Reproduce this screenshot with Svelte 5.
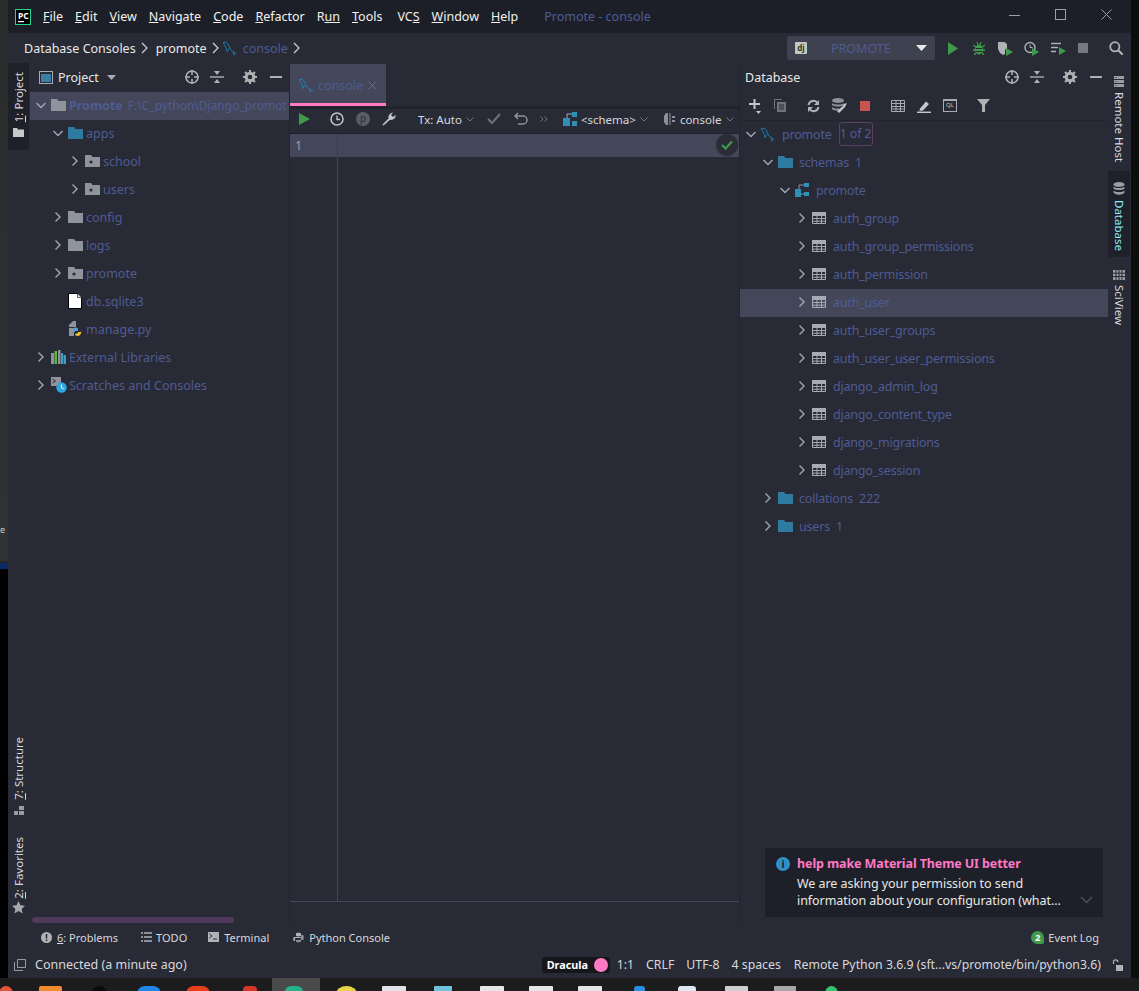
<script>
  const menus = [
    ["F", "ile"], ["E", "dit"], ["V", "iew"], ["N", "avigate"], ["C", "ode"],
    ["R", "efactor"], ["R", "un", true], ["T", "ools"], ["VC", "S", true],
    ["W", "indow"], ["H", "elp"],
  ];

  const projectTree = [
    { depth: 0, open: true, icon: "folder", label: "Promote", bold: true, path: "F:\\C_python\\Django_promot", selected: true },
    { depth: 1, open: true, icon: "folderBlue", label: "apps" },
    { depth: 2, open: false, icon: "pkg", label: "school" },
    { depth: 2, open: false, icon: "pkg", label: "users" },
    { depth: 1, open: false, icon: "folder", label: "config" },
    { depth: 1, open: false, icon: "folder", label: "logs" },
    { depth: 1, open: false, icon: "pkg", label: "promote" },
    { depth: 1, leaf: true, icon: "file", label: "db.sqlite3" },
    { depth: 1, leaf: true, icon: "python", label: "manage.py" },
    { depth: 0, open: false, icon: "libs", label: "External Libraries" },
    { depth: 0, open: false, icon: "scratch", label: "Scratches and Consoles" },
  ];

  const tables = [
    "auth_group", "auth_group_permissions", "auth_permission", "auth_user",
    "auth_user_groups", "auth_user_user_permissions", "django_admin_log",
    "django_content_type", "django_migrations", "django_session",
  ];

  const dbTree = [
    { depth: 0, open: true, icon: "mysql", label: "promote", badge: "1 of 2" },
    { depth: 1, open: true, icon: "folderBlue", label: "schemas", count: "1" },
    { depth: 2, open: true, icon: "schema", label: "promote" },
    ...tables.map((t) => ({ depth: 3, open: false, icon: "table", label: t, selected: t === "auth_user" })),
    { depth: 1, open: false, icon: "folderBlue", label: "collations", count: "222" },
    { depth: 1, open: false, icon: "folderBlue", label: "users", count: "1" },
  ];

  // x is the left edge of each taskbar icon
  const taskIcons = [
    { x: -1, w: 14, c: "#e5533d", r: "50%" },
    { x: 39, w: 23, c: "#f28a2e", r: "2px" },
    { x: 92, w: 15, c: "#0a0a0a", r: "50%" },
    { x: 137, w: 24, c: "#1f86e8", r: "8px" },
    { x: 186, w: 24, c: "#e8401c", r: "8px" },
    { x: 243, w: 14, c: "#d8352a", r: "4px" },
    { x: 285, w: 18, c: "#25b38a", r: "6px", current: true },
    { x: 336, w: 21, c: "#e9d24a", r: "50%" },
    { x: 382, w: 24, c: "#dfe3e8", r: "1px" },
    { x: 434, w: 18, c: "#6fc3df", r: "1px" },
    { x: 480, w: 24, c: "#e6e6e6", r: "1px" },
    { x: 529, w: 24, c: "#e6e6e6", r: "1px" },
    { x: 578, w: 24, c: "#e6e6e6", r: "1px" },
    { x: 634, w: 11, c: "#2a8fe0", r: "3px" },
    { x: 678, w: 18, c: "#dfe7ef", r: "3px" },
    { x: 725, w: 23, c: "#cfcfcf", r: "1px" },
    { x: 774, w: 22, c: "#a8a8a8", r: "1px" },
    { x: 825, w: 13, c: "#35c46b", r: "50%" },
  ];

  function taskMargin(i) {
    if (i === 0) return taskIcons[0].x;
    return taskIcons[i].x - taskIcons[i - 1].x - taskIcons[i - 1].w;
  }
</script>

{#snippet chevron(open)}
  <svg class="chev" width="12" height="12" viewBox="0 0 12 12">
    {#if open}
      <path d="M1.500 4l4.500 4.500L10.500 4" fill="none" stroke="#a3a7b2" stroke-width="1.400" />
    {:else}
      <path d="M3.500 1.500L8 6l-4.500 4.500" fill="none" stroke="#a3a7b2" stroke-width="1.400" />
    {/if}
  </svg>
{/snippet}

{#snippet mysql()}
  <svg width="15" height="15" viewBox="0 0 15 15">
    <path d="M.5 1.500c2.500-1 4 .5 5 2.500s1.500 4 3 5.500 3.500 2 5 3.500M.5 1.500C1 4 2.500 5.500 3.500 7.500l.5 3M4 10.500c1-1.500 1.500-2 2-3M10.500 11.500l.5 3" fill="none" stroke="#1d86b8" stroke-width="1" />
  </svg>
{/snippet}

{#snippet nodeIcon(name)}
  {#if name === "folder" || name === "folderBlue"}
    <svg width="15" height="12" viewBox="0 0 15 12">
      <path d="M0 0h6l1.500 2H15v10H0z" fill={name === "folder" ? "#8f939e" : "#2f7a9f"} />
    </svg>
  {:else if name === "pkg"}
    <svg width="15" height="12" viewBox="0 0 15 12">
      <path d="M0 0h6l1.500 2H15v10H0z" fill="#8f939e" />
      <circle cx="6" cy="7" r="1.600" fill="#282a36" />
    </svg>
  {:else if name === "file"}
    <svg width="14" height="16" viewBox="0 0 14 16">
      <path d="M.5.500h9l4 4v11H.5z" fill="#fff" stroke="#000" />
      <path d="M9.500.500v4h4" fill="#ddd" stroke="#000" stroke-width=".6" />
    </svg>
  {:else if name === "python"}
    <svg width="14" height="16" viewBox="0 0 14 16">
      <path d="M1 4l4-4h3v6H1z" fill="#8f939e" />
      <path d="M1 7h5v8H1z" fill="#8f939e" />
      <path d="M5 8c0-2 5-2 5 0v2H7v1H5z" fill="#4f9fd0" />
      <path d="M13 9c1 3-1 6-3 6s-3-1-3-2l3-1v-1h3z" fill="#f0c030" />
    </svg>
  {:else if name === "libs"}
    <svg width="15" height="14" viewBox="0 0 15 14">
      <rect x="0" y="3" width="3" height="11" fill="#8f939e" />
      <rect x="3.500" y="1" width="2.500" height="13" fill="#62b543" />
      <rect x="7" y="0" width="2.500" height="14" fill="#8f939e" />
      <rect x="10" y="3" width="2" height="11" fill="#3d9fc9" />
      <rect x="12.500" y="5" width="2.500" height="9" fill="#3d9fc9" />
    </svg>
  {:else if name === "scratch"}
    <svg width="16" height="16" viewBox="0 0 16 16">
      <rect x="0" y="0" width="10" height="9" fill="#8f939e" />
      <path d="M1.500 2l3 2-3 2" fill="none" stroke="#282a36" />
      <circle cx="10.500" cy="10.500" r="5.200" fill="#2fa8e0" />
      <path d="M10.500 7.500v3.300l2.200 1" fill="none" stroke="#fff" />
    </svg>
  {:else if name === "mysql"}
    {@render mysql()}
  {:else if name === "schema"}
    <svg width="15" height="14" viewBox="0 0 15 14">
      <rect x="9" y="0" width="5" height="4" fill="#2f8fb5" />
      <rect x="0" y="6" width="6" height="8" fill="#2f8fb5" />
      <rect x="9" y="9" width="5" height="4" fill="#2f8fb5" />
      <path d="M9 2H4v4M6 11h3" fill="none" stroke="#8f939e" />
    </svg>
  {:else if name === "table"}
    <svg width="14" height="12" viewBox="0 0 14 12">
      <path d="M.5.500h13v11H.5zM.5 3.500h13M.5 6.500h13M.5 9.200h13M5 3.500v8M9.500 3.500v8" fill="none" stroke="#a7abb6" />
      <rect x="0" y="0" width="14" height="3" fill="#a7abb6" />
    </svg>
  {/if}
{/snippet}

{#snippet treeRow(row, base)}
  <div class="row" class:selected={row.selected} style="padding-left: {base + row.depth * 17}px">
    <span class="arrow">
      {#if !row.leaf}{@render chevron(row.open)}{/if}
    </span>
    <span class="node-icon">{@render nodeIcon(row.icon)}</span>
    <span class="label" class:bold={row.bold}>{row.label}</span>
    {#if row.path}<span class="path">{row.path}</span>{/if}
    {#if row.count}<span class="count">{row.count}</span>{/if}
    {#if row.badge}<span class="badge">{row.badge}</span>{/if}
  </div>
{/snippet}

{#snippet panelTools()}
  <svg class="ic" width="16" height="16" viewBox="0 0 16 16">
    <circle cx="8" cy="8" r="6" fill="none" stroke="#afb1b3" stroke-width="1.600" />
    <path d="M8 1v5M8 10v5M1 8h5M10 8h5" stroke="#afb1b3" stroke-width="1.600" />
  </svg>
  <svg class="ic gap-m" width="14" height="14" viewBox="0 0 14 14">
    <path d="M0 7h14" stroke="#afb1b3" stroke-width="1.400" />
    <path d="M4 1h6L7 5zM4 13h6l-3-4z" fill="#afb1b3" />
  </svg>
  <svg class="ic gap-l" width="14" height="14" viewBox="0 0 14 14">
    <circle cx="7" cy="7" r="3.800" fill="none" stroke="#afb1b3" stroke-width="3" />
    <path d="M7 0v3M7 11v3M0 7h3M11 7h3M2 2l2 2M10 10l2 2M12 2l-2 2M2 12l2-2" stroke="#afb1b3" stroke-width="2" />
  </svg>
  <span class="dash"></span>
{/snippet}

{#snippet chevSmall()}
  <svg class="chev-s" width="8" height="5" viewBox="0 0 8 5"><path d="M.5.500L4 4 7.500.500" fill="none" stroke="#74767f" /></svg>
{/snippet}

{#snippet crumbSep()}
  <svg class="sep" width="7" height="12" viewBox="0 0 7 12"><path d="M1 1l5 5-5 5" fill="none" stroke="#d5d6da" stroke-width="1.200" /></svg>
{/snippet}

<div class="screen">
  <div class="desktop-edge">
    <span class="edge-text">e</span>
    <span class="edge-blue"></span>
  </div>

  <div class="window">
    <header class="titlebar">
      <svg class="pc-logo" width="16" height="16" viewBox="0 0 16 16">
        <rect x=".5" y=".5" width="15" height="15" fill="#000" stroke="#21d789" />
        <rect x="3" y="12" width="6" height="1.200" fill="#fff" />
      </svg>
      <span class="pc-text">PC</span>
      <nav class="menu">
        {#each menus as m}
          {#if m[2]}
            <span>{m[0]}<u>{m[1]}</u></span>
          {:else}
            <span><u>{m[0]}</u>{m[1]}</span>
          {/if}
        {/each}
      </nav>
      <span class="win-title">Promote - console</span>
      <div class="win-buttons">
        <svg width="12" height="12" viewBox="0 0 12 12"><path d="M0 6.500h11" stroke="#9ea0a6" /></svg>
        <svg width="12" height="12" viewBox="0 0 12 12"><rect x=".5" y=".5" width="10" height="10" fill="none" stroke="#9ea0a6" /></svg>
        <svg width="12" height="12" viewBox="0 0 12 12"><path d="M.5.500l10 10M10.500.500l-10 10" stroke="#9ea0a6" /></svg>
      </div>
    </header>

    <div class="navbar">
      <div class="crumbs">
        <span class="crumb">Database Consoles</span>
        {@render crumbSep()}
        <span class="crumb second">promote</span>
        {@render crumbSep()}
        <span class="crumb-ic">{@render mysql()}</span>
        <span class="crumb link">console</span>
        {@render crumbSep()}
      </div>
      <div class="run-tools">
        <div class="run-config">
          <span class="dj">dj</span>
          <span class="run-name">PROMOTE</span>
          <svg width="11" height="6" viewBox="0 0 11 6"><path d="M0 0h11L5.500 6z" fill="#e8e8e4" /></svg>
        </div>
        <svg class="rt r-play" width="10" height="13" viewBox="0 0 10 13"><path d="M0 0l10 6.500L0 13z" fill="#3f9b4c" /></svg>
        <svg class="rt r-bug" width="12" height="13" viewBox="0 0 12 13">
          <ellipse cx="6" cy="7.500" rx="4" ry="5" fill="#3f9b4c" />
          <path d="M0 3l3 2M12 3L9 5M0 8h3M12 8H9M1 13l2-2M11 13l-2-2M4 0l1 2.500M8 0L7 2.500" stroke="#3f9b4c" stroke-width="1.300" />
          <path d="M3 6.500h6M3 9.500h6" stroke="#282a36" />
        </svg>
        <svg class="rt r-cover" width="15" height="15" viewBox="0 0 15 15">
          <path d="M0 1h6.500l2.500 2v5l-2 .5V13l-2 1-3-2-2-4z" fill="#afb1b3" />
          <path d="M8 7l7 4-7 4z" fill="#3f9b4c" />
        </svg>
        <svg class="rt r-prof" width="15" height="15" viewBox="0 0 15 15">
          <circle cx="6" cy="6.500" r="5" fill="none" stroke="#afb1b3" stroke-width="1.400" />
          <path d="M6 3.500v3h2.500" fill="none" stroke="#afb1b3" />
          <path d="M8 7l7 4-7 4z" fill="#3f9b4c" />
        </svg>
        <svg class="rt r-conc" width="15" height="15" viewBox="0 0 15 15">
          <path d="M0 2.500h10M0 6.500h7M0 10.500h5" stroke="#afb1b3" stroke-width="1.500" />
          <path d="M8 6l7 4-7 4z" fill="#3f9b4c" />
        </svg>
        <span class="stop"></span>
        <svg class="rt r-search" width="14" height="14" viewBox="0 0 14 14">
          <circle cx="5.800" cy="5.800" r="4.600" fill="none" stroke="#afb1b3" stroke-width="1.800" />
          <path d="M9 9l5 5" stroke="#afb1b3" stroke-width="2.200" />
        </svg>
      </div>
    </div>

    <div class="main">
      <aside class="strip left">
        <div class="strip-top">
          <button class="vtab active">
            <span class="vtext"><u>1</u>: Project</span>
            <svg width="11" height="9" viewBox="0 0 11 9"><path d="M0 0h4l1 1.500h6V9H0z" fill="#c8c9cd" /></svg>
          </button>
        </div>
        <div class="strip-bottom">
          <button class="vtab structure">
            <span class="vtext"><u>7</u>: Structure</span>
            <svg width="10" height="10" viewBox="0 0 10 10"><path d="M5 0h5v4H5zM0 5h4v4H0zM5 5h5v4H5z" fill="#9a9ca3" /></svg>
          </button>
          <button class="vtab fav">
            <span class="vtext"><u>2</u>: Favorites</span>
            <svg width="13" height="13" viewBox="0 0 13 13"><path d="M6.500 0l1.900 4.300 4.600.5-3.400 3.100 1 4.600-4.100-2.400-4.100 2.400 1-4.600L0 4.800l4.600-.5z" fill="#a7a9af" /></svg>
          </button>
        </div>
      </aside>

      <section class="project">
        <div class="panel-head">
          <svg class="proj-ic" width="14" height="13" viewBox="0 0 14 13">
            <rect x=".5" y=".5" width="13" height="12" fill="none" stroke="#a7abb6" />
            <rect x="2" y="3" width="10" height="8" fill="#3d7ea6" />
          </svg>
          <span class="head-title">Project</span>
          <svg class="drop" width="9" height="5" viewBox="0 0 9 5"><path d="M0 0h9L4.500 5z" fill="#a7abb6" /></svg>
          <div class="head-tools">{@render panelTools()}</div>
        </div>
        <div class="tree">
          {#each projectTree as row}
            {@render treeRow(row, 4)}
          {/each}
        </div>
        <div class="hscroll"></div>
      </section>

      <section class="editor">
        <div class="tabs">
          <div class="tab">
            {@render mysql()}
            <span class="tab-label">console</span>
            <svg width="9" height="9" viewBox="0 0 9 9"><path d="M.5.500l8 8M8.500.500l-8 8" stroke="#6d7080" /></svg>
          </div>
        </div>
        <div class="editor-tools">
          <svg width="11" height="12" viewBox="0 0 11 12"><path d="M0 0l11 6-11 6z" fill="#3f9b4c" /></svg>
          <svg class="clock" width="14" height="14" viewBox="0 0 14 14">
            <circle cx="7" cy="7" r="6" fill="none" stroke="#c4c6cb" stroke-width="1.500" />
            <path d="M7 3.500v4h3" fill="none" stroke="#c4c6cb" stroke-width="1.300" />
          </svg>
          <span class="pin">p</span>
          <svg class="wrench" width="14" height="14" viewBox="0 0 14 14">
            <path d="M1.500 13.500l-1-1 6-6C6 4 7.500 1 11 .5L9 3l2 2 2.500-2C14 6 11 8.500 8 7.800z" fill="#c4c6cb" />
          </svg>
          <span class="tx first-tx">Tx: Auto</span>
          {@render chevSmall()}
          <svg class="check" width="14" height="12" viewBox="0 0 14 12"><path d="M1 6l4 4 8-9" fill="none" stroke="#6f717b" stroke-width="2" /></svg>
          <svg class="undo" width="14" height="14" viewBox="0 0 14 14"><path d="M1 4h8a4 4 0 0 1 0 8H4M4 1L1 4l3 3" fill="none" stroke="#8f9199" stroke-width="1.500" /></svg>
          <svg class="more" width="8" height="6" viewBox="0 0 8 6"><path d="M.5.500L3 3 .5 5.500M4.500.500L7 3 4.500 5.500" fill="none" stroke="#74767f" /></svg>
          <svg class="schema" width="14" height="14" viewBox="0 0 14 14">
            <rect x="9" y="0" width="5" height="5" fill="#2f8fb5" />
            <rect x="0" y="6" width="7" height="8" fill="#2f8fb5" />
            <rect x="9" y="9" width="5" height="5" fill="#2f8fb5" />
            <path d="M9 2H4v4" fill="none" stroke="#a7abb6" />
          </svg>
          <span class="tx schema-text">&lt;schema&gt;</span>
          {@render chevSmall()}
          <svg class="cons" width="11" height="12" viewBox="0 0 11 12">
            <path d="M4 0v12H2L0 9V3l2-3zM5.500 0h1v12h-1zM8 3h3v2H8zM8 7h3v2H8z" fill="#8f9199" />
          </svg>
          <span class="tx cons-text">console</span>
          {@render chevSmall()}
        </div>
        <div class="code">
          <div class="caret-line">
            <span class="line-no">1</span>
            <span class="gutter-line"></span>
          </div>
          <span class="ok">
            <svg width="12" height="10" viewBox="0 0 12 10"><path d="M1 5l3.500 3.500L11 1.500" fill="none" stroke="#3f9b4c" stroke-width="2.200" /></svg>
          </span>
          <div class="code-body">
            <span class="gutter-line"></span>
          </div>
        </div>
        <div class="editor-foot"></div>
      </section>

      <section class="database">
        <div class="panel-head db">
          <span class="head-title">Database</span>
          <div class="head-tools">{@render panelTools()}</div>
        </div>
        <div class="db-tools">
          <svg width="14" height="16" viewBox="0 0 14 16">
            <path d="M6.500 1v10M1 6h11" stroke="#c4c6cb" stroke-width="2" />
            <path d="M8 13h5l-2.500 3z" fill="#c4c6cb" />
          </svg>
          <svg class="t-copy" width="12" height="13" viewBox="0 0 12 13">
            <path d="M.5 10V.5h7" fill="none" stroke="#6f717b" />
            <rect x="3" y="3" width="9" height="10" fill="#6f717b" />
            <path d="M5 6h5M5 8h5M5 10h5" stroke="#282a36" />
          </svg>
          <svg class="t-refresh" width="13" height="14" viewBox="0 0 13 14">
            <path d="M1.500 6a5 5 0 0 1 9-2M11.500 8a5 5 0 0 1-9 2" fill="none" stroke="#afb1b3" stroke-width="2" />
            <path d="M12 1v5H7zM1 13V8h5z" fill="#afb1b3" />
          </svg>
          <svg class="t-manage" width="15" height="15" viewBox="0 0 15 15">
            <ellipse cx="6" cy="2.500" rx="6" ry="2.500" fill="#8f9199" />
            <path d="M0 5c2 2 10 2 12 0v2c-2 2-10 2-12 0zM0 9c2 2 6 2 7 1v2c-1 1-5 1-7-1z" fill="#8f9199" />
            <path d="M7 15l6-6 2-4-3 1-1 2-6 5z" fill="#c4c6cb" />
          </svg>
          <span class="rec"></span>
          <svg class="t-table" width="14" height="12" viewBox="0 0 14 12">
            <path d="M.5.500h13v11H.5zM.5 3.500h13M.5 6.500h13M.5 9h13M5 .5v11M9.500 .5v11" fill="none" stroke="#a7abb6" />
          </svg>
          <svg class="t-edit" width="14" height="14" viewBox="0 0 14 14">
            <path d="M3 9.500l6-7 3 2.500-6 6.500-3.500.5z" fill="#c4c6cb" />
            <path d="M0 13.300h14" stroke="#c4c6cb" stroke-width="1.500" />
          </svg>
          <span class="ql">QL</span>
          <svg class="t-filter" width="13" height="13" viewBox="0 0 13 13"><path d="M0 0h13L8 6v7H5V6z" fill="#afb1b3" /></svg>
        </div>
        <div class="tree">
          {#each dbTree as row}
            {@render treeRow(row, 4)}
          {/each}
        </div>
        <div class="balloon">
          <span class="info">i</span>
          <div class="balloon-text">
            <div class="balloon-title">help make Material Theme UI better</div>
            <div>We are asking your permission to send</div>
            <div>information about your configuration (what...</div>
          </div>
          <svg class="balloon-chev" width="13" height="8" viewBox="0 0 13 8"><path d="M1 1l5.500 5.500L12 1" fill="none" stroke="#4b4e5c" stroke-width="1.500" /></svg>
        </div>
      </section>

      <aside class="strip right">
        <button class="vtab rtab remote">
          <svg width="10" height="11" viewBox="0 0 10 11"><path d="M0 0h10v3H0zM0 4h10v3H0zM0 8h10v3H0z" fill="#9a9ca3" /><path d="M1.500 1.500h1M1.500 5.500h1M1.500 9.500h1" stroke="#282a36" /></svg>
          <span class="rtext">Remote Host</span>
        </button>
        <button class="vtab rtab active">
          <svg width="12" height="13" viewBox="0 0 12 13">
            <ellipse cx="6" cy="2.500" rx="5.500" ry="2.500" fill="#9a9ca3" />
            <path d="M.5 4.500c2 2 9 2 11 0v2c-2 2-9 2-11 0zM.5 8.500c2 2 9 2 11 0v2c-2 3-9 3-11 0z" fill="#9a9ca3" />
          </svg>
          <span class="rtext cyan">Database</span>
        </button>
        <button class="vtab rtab sci">
          <svg width="12" height="10" viewBox="0 0 12 10"><path d="M0 0h12v10H0z" fill="#9a9ca3" /><path d="M0 3.200h12M0 6.500h12M3 0v10M6 0v10M9 0v10" stroke="#282a36" /></svg>
          <span class="rtext">SciView</span>
        </button>
      </aside>
    </div>

    <div class="toolbar-bottom">
      <div class="tool">
        <svg width="11" height="11" viewBox="0 0 11 11"><circle cx="5.500" cy="5.500" r="5.500" fill="#b0b2b6" /><path d="M5.500 2v4.500M5.500 7.500V9" stroke="#282a36" stroke-width="1.500" /></svg>
        <span><u>6</u>: Problems</span>
      </div>
      <div class="tool">
        <svg width="11" height="10" viewBox="0 0 11 10"><path d="M0 1h2M3 1h8M0 5h2M3 5h8M0 9h2M3 9h8" stroke="#b0b2b6" stroke-width="1.500" /></svg>
        <span>TODO</span>
      </div>
      <div class="tool">
        <svg width="11" height="10" viewBox="0 0 11 10"><rect width="11" height="10" fill="#b0b2b6" /><path d="M1.500 2L4 4 1.500 6M5 7h4" fill="none" stroke="#282a36" /></svg>
        <span>Terminal</span>
      </div>
      <div class="tool">
        <svg width="11" height="11" viewBox="0 0 11 11">
          <path d="M3 4V1.500C3 .5 8 .5 8 1.500V4H5v1H1C0 5 0 9 1 9h1V6.500C2 6 3 6 3.500 6H7C7.500 6 8 5.500 8 5" fill="#b0b2b6" />
          <path d="M8 7v2.500c0 1-5 1-5 0V8h3c1 0 2-.5 2-1.500V3h2c1 0 1 5 0 5H8z" fill="#8c8e94" />
        </svg>
        <span>Python Console</span>
      </div>
      <div class="tool event">
        <span class="event-badge">2</span>
        <span>Event Log</span>
      </div>
    </div>

    <footer class="status">
      <svg class="status-ic" width="12" height="12" viewBox="0 0 12 12">
        <path d="M3.500.5h8v8h-8zM.5 3v8.500H9" fill="none" stroke="#9a9ca3" />
      </svg>
      <span class="connected">Connected (a minute ago)</span>
      <div class="status-right">
        <span class="theme"><b>Dracula</b><span class="dot"></span></span>
        <span>1:1</span>
        <span>CRLF</span>
        <span>UTF-8</span>
        <span>4 spaces</span>
        <span class="interpreter">Remote Python 3.6.9 (sft...vs/promote/bin/python3.6)</span>
        <svg class="lock" width="11" height="12" viewBox="0 0 11 12">
          <path d="M1.500 5V3a2.200 2.200 0 0 1 4.400 0" fill="none" stroke="#b0b2b6" stroke-width="1.200" />
          <rect x="4" y="6" width="7" height="6" fill="#b0b2b6" />
        </svg>
      </div>
    </footer>
  </div>

  <div class="desktop-right"></div>

  <div class="taskbar">
    {#each taskIcons as t, i}
      <span class="task-cell" class:current={t.current} style="margin-left: {taskMargin(i)}px; width: {t.w}px">
        <span class="task-icon" style="background: {t.c}; border-radius: {t.r}"></span>
      </span>
    {/each}
  </div>
</div>

<style>
  :global(body) {
    margin: 0;
    background: #000;
  }

  .screen {
    width: 1139px;
    height: 991px;
    overflow: hidden;
    display: grid;
    grid-template-columns: 8px 1123px 8px;
    grid-template-rows: 978px 13px;
    font-family: "Noto Sans", "Open Sans", sans-serif;
    font-size: 12.5px;
    color: #d8d9dc;
    background: #0f0f10;
  }

  .desktop-edge {
    position: relative;
    background: linear-gradient(#2a2c2c 0, #2f3332 560px, #000 570px);
    overflow: hidden;
  }

  .edge-text {
    position: absolute;
    top: 523px;
    left: 0;
    font-size: 9px;
    color: #d0d0d0;
  }

  .edge-blue {
    position: absolute;
    top: 563px;
    left: 0;
    width: 8px;
    height: 6px;
    background: #0c2a63;
  }

  .desktop-right {
    background: #0d0d0e;
  }

  .window {
    display: flex;
    flex-direction: column;
    background: #282a36;
    min-height: 0;
  }

  .titlebar {
    flex: 0 0 33px;
    display: flex;
    align-items: center;
    position: relative;
    background: #1d1f28;
    padding-left: 7px;
    white-space: nowrap;
  }

  .pc-text {
    position: absolute;
    left: 10px;
    top: 10px;
    font-size: 8.5px;
    font-weight: 700;
    color: #fff;
  }

  .menu {
    display: flex;
    gap: 12px;
    margin-left: 12px;
    color: #f2f2ee;
  }

  .menu span:nth-child(8) {
    margin-right: 3px;
  }

  .win-title {
    margin-left: 26px;
    color: #4e5c92;
  }

  .win-buttons {
    margin-left: auto;
    display: flex;
    gap: 34px;
    padding: 0 18px 4px 0;
  }

  .navbar {
    flex: 0 0 30px;
    display: flex;
    align-items: center;
    justify-content: space-between;
    padding-left: 16px;
    white-space: nowrap;
  }

  .crumbs {
    display: flex;
    align-items: center;
  }

  .crumb {
    color: #e8e8e4;
  }

  .crumb.second {
    margin-left: 8px;
  }

  .crumb.link {
    color: #4e5c92;
    margin-left: 5px;
  }

  .crumb-ic {
    display: flex;
    margin-left: 4px;
  }

  .sep {
    margin-left: 5px;
  }

  .run-tools {
    display: flex;
    align-items: center;
    padding-right: 8px;
  }

  .run-config {
    display: flex;
    align-items: center;
    width: 148px;
    height: 24px;
    box-sizing: border-box;
    padding: 0 8px 0 8px;
    background: #3e4150;
    border-radius: 2px;
  }

  .dj {
    width: 12px;
    height: 12px;
    background: #c4c7bf;
    color: #27412e;
    font-size: 8px;
    font-weight: 700;
    line-height: 11px;
    text-align: center;
    border-radius: 1px;
  }

  .run-name {
    margin-left: 24px;
    margin-right: auto;
    color: #4e5c92;
  }

  .r-play {
    margin-left: 13px;
  }

  .r-bug {
    margin-left: 15px;
  }

  .r-cover {
    margin-left: 13px;
  }

  .r-prof {
    margin-left: 11px;
  }

  .r-conc {
    margin-left: 12px;
  }

  .stop {
    width: 10px;
    height: 10px;
    margin-left: 12px;
    background: #77797f;
  }

  .r-search {
    margin-left: 21px;
  }

  .main {
    flex: 1;
    display: flex;
    min-height: 0;
  }

  .strip {
    flex: 0 0 22px;
    display: flex;
    flex-direction: column;
    justify-content: space-between;
  }

  .strip.left {
    flex-basis: 21px;
    margin-right: 1px;
  }

  .vtab {
    all: unset;
    display: flex;
    flex-direction: column;
    align-items: center;
    box-sizing: border-box;
    width: 100%;
    color: #d8d9dc;
    font-size: 11.5px;
  }

  .vtab.active {
    background: #1f212a;
  }

  .strip-top .vtab {
    height: 87px;
    padding-top: 9px;
    gap: 6px;
  }

  .strip-bottom {
    display: flex;
    flex-direction: column;
    padding-bottom: 9px;
    gap: 21px;
  }

  .vtab.structure {
    gap: 7px;
  }

  .vtab.fav {
    gap: 2px;
  }

  .vtext {
    writing-mode: vertical-rl;
    transform: rotate(180deg);
  }

  .rtab {
    gap: 5px;
  }

  .rtab.remote {
    height: 108px;
    padding-top: 13px;
  }

  .rtab.active {
    height: 86px;
    padding-top: 11px;
    color: #8be9fd;
  }

  .rtab.sci {
    padding-top: 13px;
  }

  .rtext {
    writing-mode: vertical-rl;
  }

  .rtext.cyan {
    color: #8be9fd;
  }

  .strip.right {
    justify-content: flex-start;
  }

  .project {
    position: relative;
    flex: 0 0 259px;
    min-width: 0;
    overflow: hidden;
  }

  .panel-head {
    height: 29px;
    box-sizing: border-box;
    padding: 0 0 1px 9px;
    display: flex;
    align-items: center;
  }

  .proj-ic {
    margin-right: 5px;
  }

  .head-title {
    color: #e8e8e4;
  }

  .drop {
    margin-left: 8px;
  }

  .head-tools {
    margin-left: auto;
    display: flex;
    align-items: center;
    padding-right: 7px;
  }

  .db .head-tools {
    padding-right: 6px;
  }

  .gap-m {
    margin-left: 10px;
  }

  .gap-l {
    margin-left: 19px;
  }

  .dash {
    width: 12px;
    height: 2px;
    background: #afb1b3;
    margin-left: 13px;
  }

  .tree {
    min-width: 0;
  }

  .row {
    display: flex;
    align-items: center;
    height: 28px;
    box-sizing: border-box;
    padding-bottom: 2px;
    white-space: nowrap;
    color: #4e5c92;
  }

  .row.selected {
    background: #44475a;
  }

  .database .row {
    letter-spacing: -0.2px;
  }

  .arrow {
    flex: 0 0 17px;
    display: flex;
    align-items: center;
    padding-left: 1px;
    box-sizing: border-box;
  }

  .node-icon {
    flex: 0 0 18px;
    display: flex;
    align-items: center;
  }

  .database .node-icon {
    flex-basis: 21px;
  }

  .bold {
    font-weight: 700;
  }

  .path {
    margin-left: 5px;
    font-size: 12px;
  }

  .count {
    margin-left: 6px;
  }

  .badge {
    margin-left: 7px;
    width: 34px;
    height: 24px;
    line-height: 22px;
    box-sizing: border-box;
    text-align: center;
    border: 1px solid #5c3f62;
    border-radius: 3px;
  }

  .hscroll {
    position: absolute;
    left: 2px;
    width: 202px;
    bottom: 0;
    height: 6px;
    border-radius: 3px;
    background: #50395a;
  }

  .editor {
    flex: 0 0 450px;
    display: flex;
    flex-direction: column;
    border-left: 1px solid #22242d;
    box-sizing: border-box;
    min-height: 0;
  }

  .tabs {
    height: 43px;
    flex: none;
    box-sizing: border-box;
    padding-top: 1px;
  }

  .tab {
    width: 96px;
    height: 42px;
    box-sizing: border-box;
    display: flex;
    align-items: center;
    padding: 3px 0 0 9px;
    background: #44475a;
    border-bottom: 3px solid #ff79c5;
  }

  .tab-label {
    margin: 0 5px 0 4px;
    color: #4e5c92;
  }

  .editor-tools {
    flex: none;
    height: 28px;
    display: flex;
    align-items: center;
    padding: 0 0 4px 9px;
    box-sizing: border-box;
    border-top: 3px solid #21232c;
    border-bottom: 1px solid #1f212a;
    white-space: nowrap;
    font-size: 11.5px;
  }

  .clock {
    margin-left: 20px;
  }

  .pin {
    width: 14px;
    height: 14px;
    margin-left: 12px;
    border-radius: 50%;
    background: #5b5d66;
    color: #2a2c36;
    font-size: 10px;
    line-height: 13px;
    text-align: center;
  }

  .wrench {
    margin-left: 12px;
  }

  .tx {
    margin-right: 4px;
    color: #d8d9dc;
  }

  .first-tx {
    margin-left: 22px;
  }

  .check {
    margin-left: 13px;
  }

  .undo {
    margin-left: 13px;
  }

  .more {
    margin-left: 12px;
  }

  .schema {
    margin-left: 15px;
  }

  .schema-text {
    margin-left: 4px;
  }

  .cons {
    margin-left: 16px;
  }

  .cons-text {
    margin-left: 5px;
    margin-right: 5px;
  }

  .code {
    position: relative;
    flex: 1;
    display: flex;
    flex-direction: column;
    min-height: 0;
  }

  .caret-line {
    display: flex;
    height: 23px;
    background: #44475a;
    flex: none;
  }

  .line-no {
    width: 47px;
    padding-left: 5px;
    box-sizing: border-box;
    color: #9ea0a8;
    line-height: 23px;
  }

  .gutter-line {
    display: block;
    width: 1px;
    height: 100%;
    background: #44475a;
  }

  .caret-line .gutter-line {
    background: #3c3e50;
  }

  .code-body {
    flex: 1;
    padding-left: 47px;
  }

  .ok {
    position: absolute;
    right: 1px;
    top: 0;
    width: 22px;
    height: 22px;
    display: flex;
    align-items: center;
    justify-content: center;
    border-radius: 50%;
    background: #2a2c36;
  }

  .editor-foot {
    flex: 0 0 22px;
    border-top: 1px solid #44475a;
    box-sizing: border-box;
  }

  .database {
    position: relative;
    flex: 0 0 369px;
    border-left: 1px solid #22242d;
    box-sizing: border-box;
    min-width: 0;
  }

  .panel-head.db {
    padding-left: 5px;
  }

  .db-tools {
    height: 29px;
    display: flex;
    align-items: center;
    padding: 0 0 1px 8px;
    border-bottom: 1px solid #22242d;
    box-sizing: border-box;
  }

  .t-copy {
    margin-left: 12px;
  }

  .t-refresh {
    margin-left: 21px;
  }

  .t-manage {
    margin-left: 12px;
  }

  .rec {
    width: 10px;
    height: 10px;
    margin-left: 13px;
    background: #c75450;
  }

  .t-table {
    margin-left: 21px;
  }

  .t-edit {
    margin-left: 12px;
  }

  .ql {
    width: 14px;
    height: 13px;
    margin-left: 12px;
    box-sizing: border-box;
    border: 1px solid #a7abb6;
    border-top-width: 2px;
    font-size: 6px;
    line-height: 9px;
    text-align: center;
    color: #c4c6cb;
  }

  .t-filter {
    margin-left: 20px;
  }

  .balloon {
    position: absolute;
    left: 25px;
    right: 5px;
    bottom: 6px;
    height: 69px;
    box-sizing: border-box;
    display: flex;
    background: #1e2029;
    padding: 7px 0 0 11px;
    color: #e8e8e4;
    line-height: 17px;
  }

  .info {
    flex: none;
    width: 14px;
    height: 14px;
    margin-top: 2px;
    margin-right: 7px;
    border-radius: 50%;
    background: #2f8fc9;
    color: #1e2029;
    font-size: 10.5px;
    font-weight: 700;
    line-height: 14px;
    text-align: center;
  }

  .balloon-text {
    white-space: nowrap;
    letter-spacing: -0.05px;
  }

  .balloon-title {
    color: #ff79c5;
    font-weight: 700;
    letter-spacing: -0.1px;
    margin-bottom: 3px;
  }

  .balloon-chev {
    position: absolute;
    right: 10px;
    bottom: 13px;
  }

  .toolbar-bottom {
    flex: 0 0 28px;
    display: flex;
    align-items: center;
    padding-left: 33px;
    font-size: 11px;
    white-space: nowrap;
  }

  .tool {
    display: flex;
    align-items: center;
    gap: 5px;
    margin-right: 23px;
  }

  .tool:nth-child(2) {
    gap: 4px;
    margin-right: 21px;
  }

  .tool:nth-child(3) {
    margin-right: 24px;
  }

  .tool.event {
    margin-left: auto;
    margin-right: 32px;
    gap: 4px;
  }

  .event-badge {
    width: 13px;
    height: 13px;
    border-radius: 50% 50% 2px 50%;
    background: #3f9b4c;
    color: #fff;
    font-size: 9.5px;
    font-weight: 700;
    line-height: 13px;
    text-align: center;
  }

  .status {
    flex: 0 0 27px;
    display: flex;
    align-items: center;
    padding-left: 6px;
    white-space: nowrap;
  }

  .connected {
    margin-left: 9px;
  }

  .status-right {
    margin-left: auto;
    display: flex;
    align-items: center;
    gap: 12px;
    padding-right: 8px;
    font-size: 12.3px;
  }

  .interpreter {
    margin-left: 1px;
  }

  .theme {
    display: flex;
    align-items: center;
    width: 68px;
    height: 16px;
    box-sizing: border-box;
    margin-right: -5px;
    padding-left: 5px;
    background: #16171d;
    border-radius: 3px;
    font-size: 10.8px;
    color: #fff;
  }

  .dot {
    width: 14px;
    height: 14px;
    margin-left: 6px;
    border-radius: 50%;
    background: #ff79c5;
  }

  .lock {
    margin-left: -1px;
  }

  .taskbar {
    grid-column: 1 / 4;
    display: flex;
    background: #1c1c1c;
    padding-top: 8px;
    overflow: hidden;
  }

  .task-cell {
    position: relative;
    display: block;
    height: 16px;
    flex: none;
  }

  .task-cell.current::before {
    content: "";
    position: absolute;
    left: -13px;
    right: -17px;
    top: -8px;
    height: 13px;
    background: #4a4a4a;
  }

  .task-icon {
    position: absolute;
    inset: 0;
  }
</style>
